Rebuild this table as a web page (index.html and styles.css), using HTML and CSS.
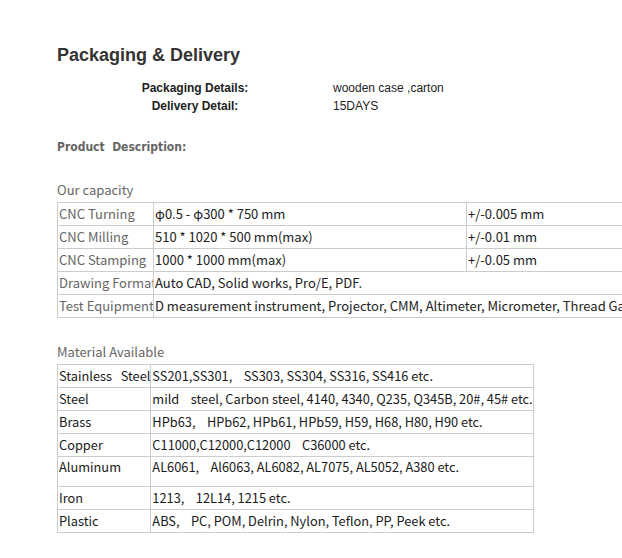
FILE: index.html
```html
<!DOCTYPE html>
<html lang="en">
<head>
  <meta charset="UTF-8">
  <meta name="viewport" content="width=device-width, initial-scale=1.0">
  <title>Packaging &amp; Delivery</title>
  <link rel="stylesheet" href="styles.css">
</head>
<body>
  <div class="page">
    <h2 class="title">Packaging &amp; Delivery</h2>

    <div class="details">
      <div class="detail-row">
        <span class="detail-label">Packaging Details:</span>
        <span class="detail-value">wooden case ,carton</span>
      </div>
      <div class="detail-row">
        <span class="detail-label">Delivery Detail:</span>
        <span class="detail-value">15DAYS</span>
      </div>
    </div>

    <p class="desc-title">Product&nbsp; Description:</p>

    <p class="caption">Our capacity</p>
    <table class="spec capacity">
      <tr>
        <td class="c1">CNC Turning</td>
        <td class="c2">φ0.5 - φ300 * 750 mm</td>
        <td class="c3">+/-0.005 mm</td>
      </tr>
      <tr>
        <td class="c1">CNC Milling</td>
        <td class="c2">510 * 1020 * 500 mm(max)</td>
        <td class="c3">+/-0.01 mm</td>
      </tr>
      <tr>
        <td class="c1">CNC Stamping</td>
        <td class="c2">1000 * 1000 mm(max)</td>
        <td class="c3">+/-0.05 mm</td>
      </tr>
      <tr>
        <td class="c1">Drawing Format</td>
        <td colspan="2">Auto CAD, Solid works, Pro/E, PDF.</td>
      </tr>
      <tr>
        <td class="c1">Test Equipment</td>
        <td colspan="2">D measurement instrument, Projector, CMM, Altimeter, Micrometer, Thread Gage, Height Gage</td>
      </tr>
    </table>

    <p class="caption material-caption">Material Available</p>
    <table class="spec material">
      <tr><td class="m1">Stainless&nbsp;&nbsp; Steel</td><td>SS201,SS301,&nbsp;&nbsp;&nbsp; SS303, SS304, SS316, SS416 etc.</td></tr>
      <tr><td class="m1">Steel</td><td>mild&nbsp;&nbsp;&nbsp; steel, Carbon steel, 4140, 4340, Q235, Q345B, 20#, 45# etc.</td></tr>
      <tr><td class="m1">Brass</td><td>HPb63,&nbsp;&nbsp;&nbsp; HPb62, HPb61, HPb59, H59, H68, H80, H90 etc.</td></tr>
      <tr><td class="m1">Copper</td><td>C11000,C12000,C12000&nbsp;&nbsp;&nbsp; C36000 etc.</td></tr>
      <tr class="tall"><td class="m1">Aluminum</td><td>AL6061,&nbsp;&nbsp;&nbsp; Al6063, AL6082, AL7075, AL5052, A380 etc.</td></tr>
      <tr><td class="m1">Iron</td><td>1213,&nbsp;&nbsp;&nbsp; 12L14, 1215 etc.</td></tr>
      <tr><td class="m1">Plastic</td><td>ABS,&nbsp;&nbsp;&nbsp; PC, POM, Delrin, Nylon, Teflon, PP, Peek etc.</td></tr>
    </table>
  </div>
</body>
</html>
```

FILE: styles.css
```css
html, body {
  margin: 0;
  padding: 0;
  background: #fff;
  overflow: hidden;
}

.page {
  padding: 44px 0 0 57px;
  font-family: "Liberation Sans", Arial, sans-serif;
  color: #333;
}

.title {
  margin: 0;
  font-size: 18px;
  font-weight: bold;
  line-height: 22px;
  color: #333;
}

.details {
  margin-top: 13px;
  font-size: 12px;
  line-height: 18px;
}

.detail-row {
  display: flex;
}

.detail-label {
  width: 276px;
  box-sizing: border-box;
  text-align: center;
  font-weight: bold;
  color: #222;
}

.detail-value {
  color: #222;
}

.desc-title {
  margin: 24px 0 0;
  font-family: "DejaVu Sans Condensed", "DejaVu Sans", sans-serif;
  font-size: 12px;
  font-weight: bold;
  line-height: 16px;
  color: #666;
}

.caption {
  margin: 27px 0 4px;
  font-family: "Noto Sans CJK SC", "Noto Sans", sans-serif;
  font-size: 13px;
  line-height: 16px;
  color: #666;
}

.material-caption {
  margin: 26px 0 4px;
}

.spec {
  border-collapse: collapse;
  font-family: "Noto Sans CJK SC", "Noto Sans", sans-serif;
  font-size: 13px;
  white-space: nowrap;
}

.spec td {
  border: 1px solid #ccc;
  padding: 0 1px;
  height: 22px;
  line-height: 16px;
  vertical-align: middle;
}

.capacity {
  width: 700px;
  table-layout: fixed;
  color: #222;
}

.capacity td {
  overflow: hidden;
}

.capacity .c1 {
  width: 93px;
  color: #666;
}

.capacity .c2 {
  width: 310px;
}

.material {
  font-size: 12.8px;
  color: #1a1a1a;
}

.material td {
  padding: 0 0 0 1px;
}

.material .tall td {
  height: 27px;
  vertical-align: top;
  padding-top: 2px;
}
```
